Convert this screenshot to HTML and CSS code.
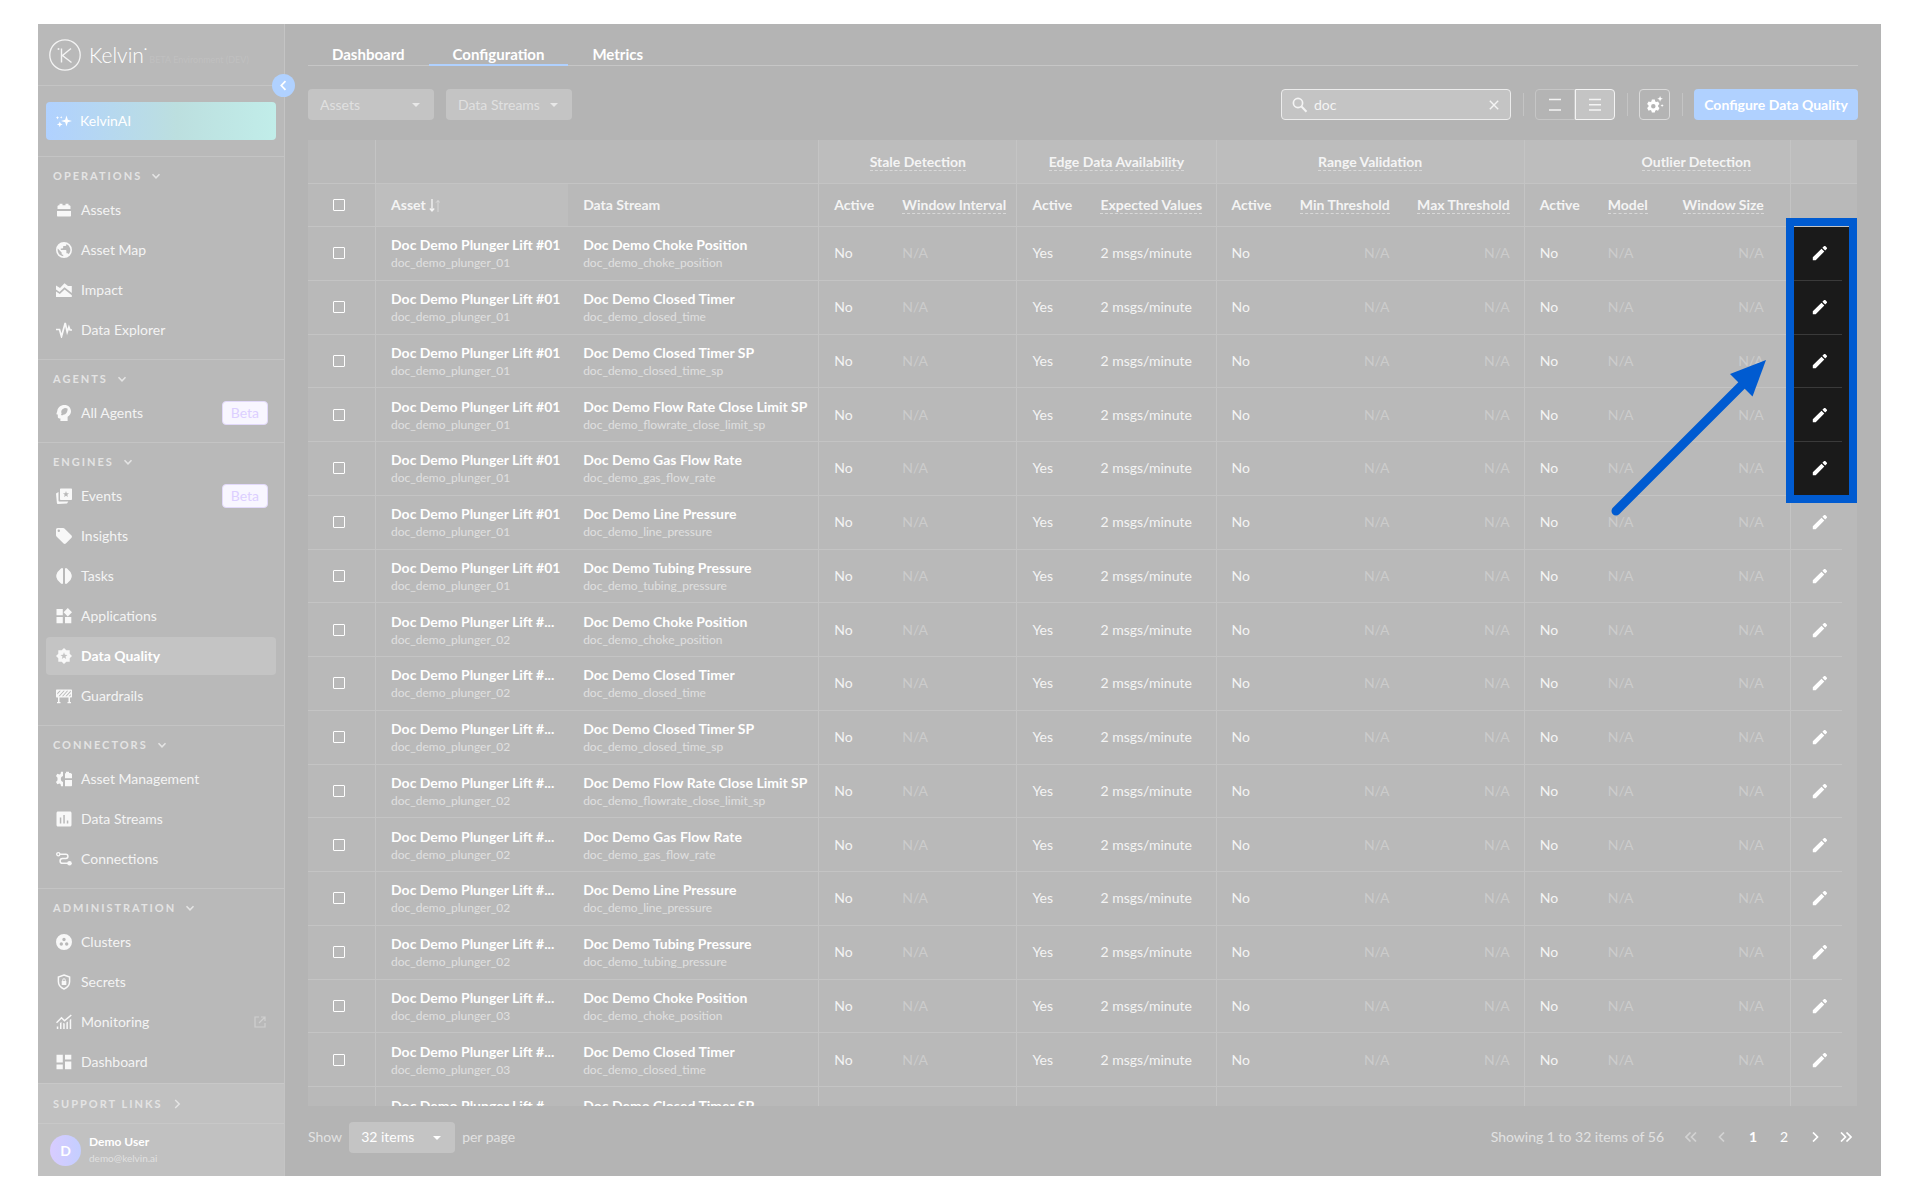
FILE: index.html
```html
<!DOCTYPE html>
<html lang="en">
<head>
    <meta charset="UTF-8">
    <meta name="viewport" content="width=device-width, initial-scale=1.0">
    <title>Kelvin - Data Quality</title>
    <link rel="stylesheet" href="styles.css">
</head>
<body>

    <!-- Shared icons -->
    <svg class="sprite" aria-hidden="true">
        <symbol id="i-down" viewBox="0 0 10 10"><path d="M1.5 3.2 5 6.8l3.500-3.600" fill="none" stroke="currentColor" stroke-width="1.5"/></symbol>
        <symbol id="i-right" viewBox="0 0 10 10"><path d="M3.200 1 7.200 5l-4 4" fill="none" stroke="currentColor" stroke-width="1.500"/></symbol>
        <symbol id="i-pencil" viewBox="0 0 16 16"><path d="M.8 12.300 9.500 3.700l2.800 2.800L3.700 15.200H.8zM10.400 2.800l1.500-1.500c.5-.5 1.200-.5 1.600 0l1.200 1.200c.5.5.5 1.200 0 1.600l-1.500 1.500z" fill="currentColor"/></symbol>
    </svg>

    <div class="app">

        <!-- Sidebar -->
        <aside class="sidebar">
            <button class="collapse" aria-label="Collapse menu">
                <svg viewBox="0 0 10 10" width="11" height="11"><path d="M6.800 1 3 5l3.800 4" fill="none" stroke="currentColor" stroke-width="1.600"/></svg>
            </button>

            <div class="brand">
                <svg viewBox="0 0 32 32" width="32" height="32">
                    <circle cx="16" cy="16" r="15.200" fill="none" stroke="currentColor" stroke-width="1.300"/>
                    <path d="M12.500 9.500v14M22 9.500l-8.500 7 9 7" fill="none" stroke="currentColor" stroke-width="1.400"/>
                    <circle cx="9.500" cy="10" r="1" fill="currentColor"/>
                </svg>
                <span class="brand-name">Kelvin<sup>•</sup></span>
                <span class="brand-env">BETA Environment (DEV)</span>
            </div>

            <div class="ai">
                <a href="#" class="ai-link">
                    <svg viewBox="0 0 16 16" width="16" height="16" fill="currentColor"><path d="M10.500 2.500 11.800 6.700 16 8l-4.200 1.300-1.300 4.200-1.300-4.200L5 8l4.200-1.300zM3.800 8.500l.8 2.100 2.100.8-2.100.8-.8 2.100-.8-2.100-2.100-.8 2.100-.8zM1.500 3l.5 1.200 1.200.5L2 5.200l-.5 1.200L1 5.200-.2 4.700 1 4.200zM5.200 3l.4.9.9.4-.9.4-.4.9-.4-.9-.9-.4.9-.4z"/></svg>
                    KelvinAI
                </a>
            </div>

            <nav class="menu">
                <section>
                    <h2>Operations <svg width="10" height="10"><use href="#i-down"/></svg></h2>
                    <a href="#">
                        <svg viewBox="0 0 16 16"><path d="M1.500 7V4l1-.800h1V1.800h3v1.400h3V1.800h3v1.400h1l1 .800v3zM1 9h14v4.500c0 .600-.400 1-1 1H2c-.600 0-1-.400-1-1z"/></svg>
                        Assets
                    </a>
                    <a href="#">
                        <svg viewBox="0 0 16 16"><path fill-rule="evenodd" d="M8 0a8 8 0 1 0 0 16A8 8 0 0 0 8 0zM7.200 14.300A6.400 6.400 0 0 1 1.800 6.600L5.600 10.400v.800c0 .900.700 1.600 1.600 1.600zM12.700 12.300a1.600 1.600 0 0 0-1.500-1.100h-.8V8.800c0-.400-.400-.8-.8-.8H4.800V6.400h1.600c.4 0 .8-.4.8-.8V4h1.600c.9 0 1.600-.7 1.600-1.600v-.3a6.400 6.400 0 0 1 2.300 10.200z"/></svg>
                        Asset Map
                    </a>
                    <a href="#">
                        <svg viewBox="0 0 16 16"><path d="M0 3.500 4 6l4.500-4.800L12 4h3.800v7L8.500 5.300 3.500 10 0 7.500zM0 9.500 3.800 12l4.800-4.500 7.200 5.700V15H0z"/></svg>
                        Impact
                    </a>
                    <a href="#">
                        <svg viewBox="0 0 16 16"><path d="M0 7.500h3.500l2 7L9.200 1l2 9 1.700-5L14 8h2" fill="none" stroke="currentColor" stroke-width="1.700"/></svg>
                        Data Explorer
                    </a>
                </section>

                <section>
                    <h2>Agents <svg width="10" height="10"><use href="#i-down"/></svg></h2>
                    <a href="#">
                        <svg viewBox="0 0 16 16"><path fill-rule="evenodd" d="M8.500 0C4.500 0 1.500 2.700 1.300 6L.5 8.500c-.2.500.2 1 .7 1h.6v2.300c0 .9.700 1.600 1.600 1.600h1V16h7.200v-4.300c2-1.100 3.400-3 3.400-5.200C15 2.700 12.200 0 8.500 0zM5.600 8.500a3.700 3.700 0 0 1 2.700-5.300c1.500-.3 2.700.2 3.400.5-.2 3.600-1.600 5.600-4.400 6l-1.300.9-1-.8z"/></svg>
                        All Agents <span class="badge">Beta</span>
                    </a>
                </section>

                <section>
                    <h2>Engines <svg width="10" height="10"><use href="#i-down"/></svg></h2>
                    <a href="#">
                        <svg viewBox="0 0 16 16"><path fill-rule="evenodd" d="M5 .5h10c.6 0 1 .4 1 1V11c0 .6-.4 1-1 1H5c-.6 0-1-.4-1-1V1.500c0-.6.4-1 1-1zM10 3l-.8 2.200-2.200.1 1.700 1.400-.6 2.200L10 7.700l1.900 1.200-.6-2.200L13 5.300l-2.200-.1zM0 5.500 2.500 4v8.500c0 .600.400 1 1 1h8.800L11 15.500l-8.800.5c-.7 0-1.200-.4-1.300-1z"/></svg>
                        Events <span class="badge">Beta</span>
                    </a>
                    <a href="#">
                        <svg viewBox="0 0 16 16"><path fill-rule="evenodd" d="M0 1.700C0 .8.700 0 1.600 0h5.600c.5 0 .9.200 1.200.5l7.100 7.100c.6.6.6 1.600 0 2.200l-5.700 5.700c-.6.600-1.600.600-2.200 0L.5 8.400A1.600 1.600 0 0 1 0 7.300zM2.800 1.600a1.200 1.200 0 1 0 0 2.400 1.200 1.200 0 0 0 0-2.400z"/></svg>
                        Insights
                    </a>
                    <a href="#">
                        <svg viewBox="0 0 16 16"><path d="M7 .3v15.400H5.200L1.500 12 .3 9V7l1.200-3L5.200.3zM9 .3v15.400h1.800l3.700-3.700 1.200-3V7l-1.200-3L10.800.3z"/></svg>
                        Tasks
                    </a>
                    <a href="#">
                        <svg viewBox="0 0 16 16"><path d="M.5 1h6.300v6.300H.5zM.5 9h6.300v6.300H.5zM9 9h6.300v6.300H9zM11.800 0 16 4.200l-4.200 4.200-4.200-4.200z"/></svg>
                        Applications
                    </a>
                    <a href="#" class="current">
                        <svg viewBox="0 0 16 16"><path fill-rule="evenodd" d="m8 0 2.300 2.300h3.400v3.400L16 8l-2.300 2.300v3.400h-3.400L8 16l-2.300-2.300H2.300v-3.400L0 8l2.300-2.300V2.300h3.400zM8 4.300l-.9 2.500-2.600.1 2 1.600-.7 2.500L8 9.500l2.200 1.500-.7-2.500 2-1.600-2.600-.1z"/></svg>
                        Data Quality
                    </a>
                    <a href="#">
                        <svg viewBox="0 0 16 16"><path fill-rule="evenodd" d="M1 1.500h14c.6 0 1 .4 1 1v6c0 .6-.4 1-1 1h-1V14h1v1.300h-3.500V14h1V9.500h-9V14h1v1.300H1V14h1V9.500H1c-.6 0-1-.4-1-1v-6c0-.6.4-1 1-1zM1.300 6.500l3.500-3.700H3.500L1.300 5zM2.500 8.300h1.200l5-5.500H7.500zM6 8.300h1.200l5-5.500H11zM9.500 8.300h1.200l4-4.400V2.800h-.3zM12.700 8.300h1.200l.8-.9V6.100z"/></svg>
                        Guardrails
                    </a>
                </section>

                <section>
                    <h2>Connectors <svg width="10" height="10"><use href="#i-down"/></svg></h2>
                    <a href="#">
                        <svg viewBox="0 0 16 16"><path fill-rule="evenodd" d="M7 .8v4.300a3 3 0 0 0 0 5.800v4.300H5l-.5-2.300-1-.500-2.200.8L0 11l1.500-1.800V6.800L0 5l1.300-2.200 2.200.8 1-.500L5 .8zM9 7.200V2.500l1-.500V.8h3V2h1.500L16 3v4.200zM9 9h7v5.200c0 .600-.400 1-1 1H9z"/></svg>
                        Asset Management
                    </a>
                    <a href="#">
                        <svg viewBox="0 0 16 16"><path fill-rule="evenodd" d="M2 .5h12c.8 0 1.500.7 1.500 1.500v12c0 .8-.7 1.500-1.500 1.500H2c-.8 0-1.500-.7-1.500-1.500V2C.5 1.200 1.200.5 2 .5zM3.800 6.500v6h1.500v-6zM7.300 4v8.500h1.500V4zM10.800 9.500v3h1.500v-3z"/></svg>
                        Data Streams
                    </a>
                    <a href="#">
                        <svg viewBox="0 0 16 16"><path d="M3.500 3.200h6.300a2 2 0 0 1 0 4.300H6.500a2.300 2.300 0 0 0 0 4.800H12" fill="none" stroke="currentColor" stroke-width="1.500"/><circle cx="2.300" cy="3.200" r="1.600" fill="none" stroke="currentColor" stroke-width="1.300"/><circle cx="13.500" cy="12.300" r="2.300"/></svg>
                        Connections
                    </a>
                </section>

                <section>
                    <h2>Administration <svg width="10" height="10"><use href="#i-down"/></svg></h2>
                    <a href="#">
                        <svg viewBox="0 0 16 16"><path fill-rule="evenodd" d="M8 0a8 8 0 1 0 0 16A8 8 0 0 0 8 0zM8 3.800a1.700 1.700 0 1 1 0 3.400 1.700 1.700 0 0 1 0-3.400zM5.300 8.300a1.700 1.700 0 1 1 0 3.400 1.700 1.700 0 0 1 0-3.400zM10.700 8.300a1.700 1.700 0 1 1 0 3.400 1.700 1.700 0 0 1 0-3.400z"/></svg>
                        Clusters
                    </a>
                    <a href="#">
                        <svg viewBox="0 0 16 16"><path d="m8 1 5.600 2v4.500c0 3.500-2.300 6.200-5.600 7.500-3.300-1.300-5.600-4-5.600-7.500V3z" fill="none" stroke="currentColor" stroke-width="1.500"/><path fill-rule="evenodd" d="M5.700 7h.6V6a1.700 1.700 0 0 1 3.400 0v1h.6v4H5.700zM7.200 7h1.600V6a.8.8 0 0 0-1.600 0z"/></svg>
                        Secrets
                    </a>
                    <a href="#">
                        <svg viewBox="0 0 16 16"><path d="M.5 8.800 5.500 3.800l3 3L15.300 1" fill="none" stroke="currentColor" stroke-width="1.500"/><path d="M.8 12.500h1.500V15H.8zM4 9v6h1.500V8zM7.200 9v6h1.500V9.500zM10.400 8.500V15h1.500V7.500zM13.700 6v9h1.500V4.800z"/></svg>
                        Monitoring
                        <svg class="external" viewBox="0 0 12 12"><path d="M5 1H1v10h10V7M7 1h4v4M11 1 5 7" fill="none" stroke="currentColor" stroke-width="1.200"/></svg>
                    </a>
                    <a href="#">
                        <svg viewBox="0 0 16 16"><path d="M.5.800h6.300v7.700H.5zM.5 10.500h6.300v4.800H.5zM9 .800h6.300v4.800H9zM9 7.500h6.300v7.800H9z"/></svg>
                        Dashboard
                    </a>
                </section>
            </nav>

            <div class="support">
                <h2>Support Links <svg width="10" height="10"><use href="#i-right"/></svg></h2>
            </div>
            <div class="user">
                <span class="avatar">D</span>
                <div>
                    <div class="user-name">Demo User</div>
                    <div class="user-mail">demo@kelvin.ai</div>
                </div>
            </div>
        </aside>

        <!-- Data Quality -->
        <main class="main">
            <nav class="tabs">
                <a href="#">Dashboard</a>
                <a href="#" class="active">Configuration</a>
                <a href="#">Metrics</a>
            </nav>

            <div class="toolbar">
                <div class="select filter">
                    <select aria-label="Assets"><option>Assets</option></select>
                </div>
                <div class="select filter">
                    <select aria-label="Data Streams"><option>Data Streams</option></select>
                </div>

                <div class="search">
                    <svg viewBox="0 0 16 16" width="16" height="16"><circle cx="6" cy="6" r="4.600" fill="none" stroke="currentColor" stroke-width="1.700"/><path d="m9.500 9.500 5 5.300" stroke="currentColor" stroke-width="2"/></svg>
                    <input type="text" value="doc" aria-label="Search">
                    <button aria-label="Clear search"><svg viewBox="0 0 10 10" width="10" height="10"><path d="m.8.800 8.400 8.400M9.200.8.8 9.200" stroke="currentColor" stroke-width="1.400"/></svg></button>
                </div>
                <span class="divider"></span>
                <div class="density">
                    <button aria-label="Comfortable rows"><svg viewBox="0 0 12 14" width="12" height="14"><path d="M0 1.500h12M0 12h12" stroke="currentColor" stroke-width="1.500"/></svg></button>
                    <button class="on" aria-label="Compact rows"><svg viewBox="0 0 12 14" width="12" height="14"><path d="M0 1.500h12M0 6.800h12M0 12h12" stroke="currentColor" stroke-width="1.500"/></svg></button>
                </div>
                <span class="divider"></span>
                <button class="settings" aria-label="Table settings">
                    <svg viewBox="0 0 16 16" width="18" height="18" fill="currentColor"><path fill-rule="evenodd" d="M5.200 3.200h2.600l.4 1.600.9.500 1.600-.5 1.300 2.300L10.800 8.300v1.200l1.200 1.200-1.300 2.300-1.600-.5-.9.500-.4 1.600H5.200l-.4-1.600-.9-.5-1.600.5L1 10.700l1.200-1.200V8.300L1 7.100l1.300-2.300 1.600.5.9-.5zM6.500 7a2 2 0 1 0 0 4 2 2 0 0 0 0-4zM12.500 0l.7 1.800 1.800.7-1.800.7-.7 1.800-.7-1.800-1.800-.7 1.800-.7zM14.300 7l.4 1.100 1.100.4-1.100.4-.4 1.100-.4-1.100-1.100-.4 1.100-.4z"/></svg>
                </button>
                <span class="divider"></span>
                <button class="primary">Configure Data Quality</button>
            </div>

            <div class="grid">
                <table>
                    <colgroup>
                        <col class="c-check"><col class="c-asset"><col class="c-stream">
                        <col class="c-active"><col class="c-interval">
                        <col class="c-active"><col class="c-expected">
                        <col class="c-active"><col class="c-min"><col class="c-max">
                        <col class="c-active"><col class="c-model"><col class="c-size">
                        <col class="c-edit"><col class="c-gutter">
                    </colgroup>
                    <thead>
                        <tr class="groups">
                            <th class="end"></th>
                            <th class="end" colspan="2"></th>
                            <th class="end group" colspan="2"><span>Stale Detection</span></th>
                            <th class="end group" colspan="2"><span>Edge Data Availability</span></th>
                            <th class="end group" colspan="3"><span>Range Validation</span></th>
                            <th class="end group outlier" colspan="3"><span>Outlier Detection</span></th>
                            <th class="group" colspan="2"></th>
                        </tr>
                        <tr>
                            <th class="check end"><input type="checkbox" aria-label="Select all rows"></th>
                            <th class="sorted">Asset
                                <svg viewBox="0 0 11 13" width="11" height="13"><path d="M3 0v12M.8 9.500 3 12l2.200-2.500" fill="none" stroke="currentColor" stroke-width="1.300"/><path d="M9 13V1.500M7 3.700l2-2.200 2 2.200" fill="none" stroke="currentColor" stroke-width="1" opacity=".5"/></svg>
                            </th>
                            <th class="end">Data Stream</th>
                            <th>Active</th>
                            <th class="end"><span>Window Interval</span></th>
                            <th>Active</th>
                            <th class="end"><span>Expected Values</span></th>
                            <th>Active</th>
                            <th class="num"><span>Min Threshold</span></th>
                            <th class="num end"><span>Max Threshold</span></th>
                            <th>Active</th>
                            <th><span>Model</span></th>
                            <th class="num size end"><span>Window Size</span></th>
                            <th colspan="2"></th>
                        </tr>
                    </thead>
                    <tbody id="rows"></tbody>
                </table>

                <!-- Callout on the edit buttons -->
                <div class="callout"></div>
                <svg class="arrow" viewBox="0 0 160 160" width="160" height="160">
                    <path d="M6 154 133 27" stroke="#005bd1" stroke-width="9" stroke-linecap="round"/>
                    <path d="M156 3 120 17l22.500 22.500z" fill="#005bd1"/>
                </svg>
            </div>

            <footer class="pager">
                <label for="pageSize">Show</label>
                <div class="select size-select">
                    <select id="pageSize"><option>32 items</option></select>
                </div>
                <span>per page</span>
                <span class="range">Showing 1 to 32 items of 56</span>
                <div class="pages">
                    <button disabled aria-label="First page"><svg viewBox="0 0 12 10" width="12" height="10"><path d="M5.500.5 1 5l4.500 4.500M11 .5 6.500 5 11 9.500"/></svg></button>
                    <button disabled aria-label="Previous page"><svg viewBox="0 0 12 10" width="12" height="10"><path d="M8 .5 3.500 5 8 9.500"/></svg></button>
                    <button class="on">1</button>
                    <button>2</button>
                    <button aria-label="Next page"><svg viewBox="0 0 12 10" width="12" height="10"><path d="M4 .5 8.500 5 4 9.500"/></svg></button>
                    <button aria-label="Last page"><svg viewBox="0 0 12 10" width="12" height="10"><path d="M1 .5 5.500 5 1 9.500M6.500.5 11 5 6.500 9.500"/></svg></button>
                </div>
            </footer>
        </main>
    </div>

    <script src="script.js"></script>
</body>
</html>
```

FILE: styles.css
```css
* {
    box-sizing: border-box;
}

body {
    margin: 0;
    padding: 24px 39px 24px 38px;
    background: #fff;
    color: #f4f4f4;
    font-family: Lato, "Open Sans", sans-serif;
    font-size: 14px;
    line-height: 18px;
}

a {
    color: inherit;
    text-decoration: none;
}

button, input, select {
    font: inherit;
    color: inherit;
    margin: 0;
}

button {
    display: flex;
    align-items: center;
    justify-content: center;
    padding: 0;
    border: none;
    background: none;
    cursor: pointer;
}

.sprite {
    position: absolute;
    width: 0;
    height: 0;
}

.app {
    display: flex;
    height: calc(100vh - 48px);
    background: #b4b4b4;
}

/* Sidebar */
.sidebar {
    position: relative;
    display: flex;
    flex-direction: column;
    flex: none;
    width: 247px;
    background: #b9b9b9;
    border-right: 1px solid #c4c4c4;
}

.collapse {
    position: absolute;
    top: 50px;
    right: -11px;
    width: 23px;
    height: 23px;
    border-radius: 50%;
    background: #b0d1ff;
    color: #fff;
}

.brand {
    display: flex;
    align-items: center;
    height: 62px;
    padding-left: 11px;
    border-bottom: 1px solid #c4c4c4;
    white-space: nowrap;
}

.brand-name {
    margin-left: 8px;
    font-size: 21px;
    font-weight: 300;
    color: #fff;
}

.brand-name sup {
    font-size: 6px;
    line-height: 0;
    vertical-align: 12px;
}

.brand-env {
    padding: 10px 0 0 2px;
    font-size: 9px;
    color: #c0c0c0;
}

.ai {
    padding: 16px 8px;
}

.ai-link {
    display: flex;
    align-items: center;
    gap: 8px;
    height: 38px;
    padding-left: 10px;
    border-radius: 4px;
    background: linear-gradient(90deg, #b0d1ff, #bcdfdf 57%, #c1ede9);
    color: #fff;
}

.menu {
    flex: 1;
    min-height: 0;
    overflow: hidden;
}

.menu section {
    padding: 0 8px 8px;
    border-top: 1px solid #c4c4c4;
}

.sidebar h2 {
    display: flex;
    align-items: center;
    gap: 9px;
    height: 34px;
    margin: 0;
    padding: 4px 7px 0;
    font-size: 11px;
    font-weight: 700;
    letter-spacing: 2px;
    text-transform: uppercase;
    color: #e4e4e4;
}

.menu a {
    display: flex;
    align-items: center;
    gap: 9px;
    height: 38px;
    margin-bottom: 2px;
    padding: 0 8px 0 10px;
    border-radius: 4px;
}

.menu a svg {
    width: 16px;
    height: 16px;
    fill: currentColor;
    color: #f8f8f8;
}

.menu a .external {
    width: 12px;
    height: 12px;
    margin: 0 2px 0 auto;
    color: #cfcfcf;
}

.menu .current {
    background: #c4c4c4;
    color: #fff;
    font-weight: 700;
}

.badge {
    margin-left: auto;
    padding: 2px 8px;
    border: 1px solid #e2d9fa;
    border-radius: 4px;
    background: #f8f6ff;
    color: #dccfff;
}

.support {
    height: 40px;
    background: #c1c1c1;
    border-top: 1px solid #c8c8c8;
    padding: 0 8px;
}

.support h2 {
    height: 36px;
}

.user {
    display: flex;
    align-items: center;
    gap: 8px;
    height: 53px;
    padding: 0 12px;
    background: #c1c1c1;
    border-top: 1px solid #c8c8c8;
}

.avatar {
    width: 31px;
    border-radius: 50%;
    background: linear-gradient(90deg, #d8ccff, #c4ceff);
    color: #fff;
    font-weight: 700;
    line-height: 31px;
    text-align: center;
}

.user-name {
    font-size: 12px;
    font-weight: 700;
    line-height: 16px;
    color: #fff;
}

.user-mail {
    font-size: 10px;
    line-height: 16px;
    color: #e0e0e0;
}

/* Main area */
.main {
    display: flex;
    flex-direction: column;
    flex: 1;
    min-width: 0;
    padding: 0 23px;
}

.tabs {
    display: flex;
    align-items: flex-end;
    height: 42px;
    margin-bottom: 23px;
    box-shadow: inset 0 -1px #c6c6c6;
}

.tabs a {
    padding: 0 24px 1px;
    border-bottom: 2px solid transparent;
    font-size: 15px;
    font-weight: 700;
    color: #fff;
}

.tabs .active {
    border-color: #b0d1ff;
}

.toolbar {
    display: flex;
    align-items: center;
    gap: 12px;
    margin-bottom: 20px;
}

.select {
    position: relative;
    height: 31px;
    border-radius: 4px;
    background: #c4c4c4;
}

.select::after {
    content: "";
    position: absolute;
    top: 14px;
    right: 14px;
    border: 4px solid transparent;
    border-top-color: currentColor;
    pointer-events: none;
}

.select select {
    appearance: none;
    width: 100%;
    height: 31px;
    padding: 0 24px 0 12px;
    border: none;
    background: none;
}

.filter {
    width: 126px;
    color: #e8e8e8;
}

.filter select {
    color: #e0e0e0;
}

.search {
    display: flex;
    align-items: center;
    gap: 6px;
    width: 230px;
    height: 31px;
    margin-left: auto;
    padding: 0 11px 0 10px;
    border: 1px solid #ececec;
    border-radius: 4px;
    background: #c4c4c4;
}

.search input {
    flex: 1;
    min-width: 0;
    padding: 0;
    border: none;
    outline: none;
    background: none;
}

.divider {
    width: 1px;
    height: 23px;
    background: #c4c4c4;
}

.search ~ .divider {
    margin: 0 -1px 0 0;
}

.density {
    display: flex;
}

.density button {
    width: 40px;
    height: 31px;
    border: 1px solid #c6c6c6;
    border-radius: 4px 0 0 4px;
}

.density .on {
    border-color: #f4f4f4;
    border-radius: 0 4px 4px 0;
    background: #c4c4c4;
}

.settings {
    width: 31px;
    height: 31px;
    border: 1px solid #dadada;
    border-radius: 4px;
    color: #fff;
}

.primary {
    width: 164px;
    height: 31px;
    border-radius: 4px;
    background: #b0d1ff;
    color: #fff;
    font-weight: 700;
    white-space: nowrap;
}

/* Table */
.grid {
    position: relative;
    flex: 1;
    min-height: 0;
    margin-right: 1px;
    overflow: hidden;
    background: #b9b9b9;
}

table {
    width: 100%;
    height: 1001px;
    table-layout: fixed;
    border-collapse: separate;
    border-spacing: 0;
}

.c-check { width: 68px; }
.c-asset { width: 192px; }
.c-stream { width: 251px; }
.c-active { width: 68px; }
.c-interval { width: 130px; }
.c-expected { width: 131px; }
.c-min { width: 119px; }
.c-max { width: 121px; }
.c-model { width: 77px; }
.c-size { width: 121px; }
.c-edit { width: 51px; }
.c-gutter { width: 15px; }

th, td {
    padding: 0 0 0 15px;
    border-bottom: 1px solid #c4c4c4;
    text-align: left;
    white-space: nowrap;
}

th {
    height: 43px;
    font-weight: 700;
}

th span {
    border-bottom: 1px dashed #d8d8d8;
}

.end {
    border-right: 1px solid #c4c4c4;
}

.groups th {
    height: 44px;
    padding: 0;
    text-align: center;
}

.group {
    background: #bdbdbd;
}

.groups .outlier {
    padding-left: 78px;
}

.sorted {
    background: #bebebe;
}

.sorted svg {
    vertical-align: -2px;
}

.check {
    padding-left: 25px;
}

.check input {
    appearance: none;
    display: block;
    width: 12px;
    height: 12px;
    border: 1px solid #fff;
    border-radius: 1px;
}

.num {
    padding: 0 14px 0 0;
    text-align: right;
}

.size {
    padding-right: 26px;
}

.name {
    padding-top: 2px;
    font-weight: 700;
    color: #fff;
}

.id {
    font-size: 12px;
    color: #e0e0e0;
}

.none {
    color: #cccccc;
}

.edit {
    padding: 0;
}

.edit button {
    width: 100%;
    padding-left: 7px;
    color: #fff;
}

.gutter {
    padding: 0;
    border: none;
}

.dark .edit, .dark .gutter {
    background: #1a1a1a;
    border-color: #3a3a3a;
}

.callout {
    position: absolute;
    top: 78px;
    right: 0;
    width: 71px;
    height: 285px;
    border: 8px solid #005bd1;
    pointer-events: none;
}

.arrow {
    position: absolute;
    top: 217px;
    right: 87px;
    pointer-events: none;
}

/* Pager */
.pager {
    display: flex;
    align-items: center;
    gap: 7px;
    height: 70px;
    padding-bottom: 8px;
    color: #e2e2e2;
}

.size-select {
    width: 106px;
    color: #fff;
}

.range {
    margin-left: auto;
}

.pages {
    display: flex;
    gap: 7px;
    padding-left: 8px;
}

.pages button {
    width: 24px;
    height: 24px;
    color: #fff;
}

.pages button:disabled {
    color: #d2d2d2;
}

.pages svg {
    fill: none;
    stroke: currentColor;
    stroke-width: 1.700;
}

.pages .on {
    font-weight: 700;
}
```

FILE: script.js
```javascript
const streams = [
    ["Doc Demo Choke Position", "doc_demo_choke_position"],
    ["Doc Demo Closed Timer", "doc_demo_closed_time"],
    ["Doc Demo Closed Timer SP", "doc_demo_closed_time_sp"],
    ["Doc Demo Flow Rate Close Limit SP", "doc_demo_flowrate_close_limit_sp"],
    ["Doc Demo Gas Flow Rate", "doc_demo_gas_flow_rate"],
    ["Doc Demo Line Pressure", "doc_demo_line_pressure"],
    ["Doc Demo Tubing Pressure", "doc_demo_tubing_pressure"]
];

const assets = [
    ["Doc Demo Plunger Lift #01", "doc_demo_plunger_01", 7],
    ["Doc Demo Plunger Lift #...", "doc_demo_plunger_02", 7],
    ["Doc Demo Plunger Lift #...", "doc_demo_plunger_03", 3]
];

const highlighted = 5;
let html = "";
let index = 0;

assets.forEach(([assetName, assetId, count]) => {
    streams.slice(0, count).forEach(([streamName, streamId]) => {
        html += `<tr class="${index < highlighted ? "dark" : ""}">
            <td class="check end"><input type="checkbox" aria-label="Select ${streamId} of ${assetId}"></td>
            <td><div class="name">${assetName}</div><div class="id">${assetId}</div></td>
            <td class="end"><div class="name">${streamName}</div><div class="id">${streamId}</div></td>
            <td>No</td>
            <td class="none end">N/A</td>
            <td>Yes</td>
            <td class="end">2 msgs/minute</td>
            <td>No</td>
            <td class="none num">N/A</td>
            <td class="none num end">N/A</td>
            <td>No</td>
            <td class="none">N/A</td>
            <td class="none num size end">N/A</td>
            <td class="edit"><button aria-label="Edit"><svg width="16" height="16"><use href="#i-pencil"/></svg></button></td>
            <td class="gutter"></td>
        </tr>`;
        index++;
    });
});

document.getElementById("rows").innerHTML = html;
```
